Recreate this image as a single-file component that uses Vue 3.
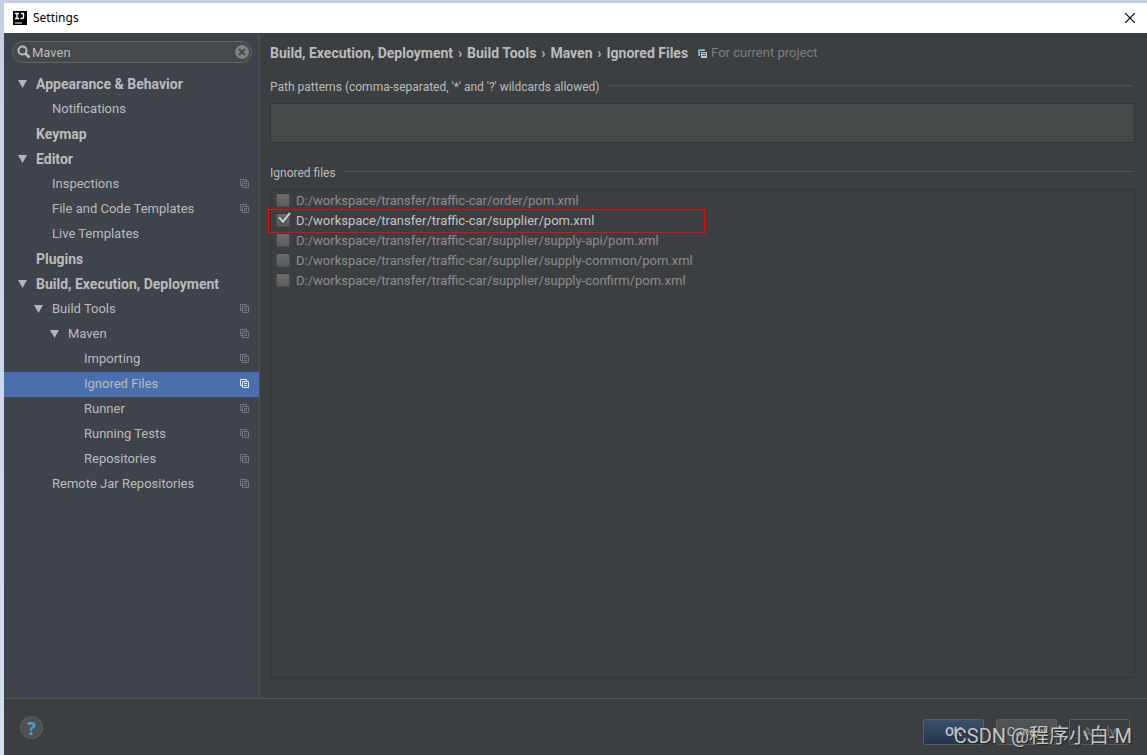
<script setup>
import { ref } from 'vue'

const query = ref('Maven')
const patterns = ref('')

const tree = [
  { label: 'Appearance & Behavior', level: 0, open: true, bold: true },
  { label: 'Notifications', level: 1 },
  { label: 'Keymap', level: 0, bold: true },
  { label: 'Editor', level: 0, open: true, bold: true },
  { label: 'Inspections', level: 1, project: true },
  { label: 'File and Code Templates', level: 1, project: true },
  { label: 'Live Templates', level: 1 },
  { label: 'Plugins', level: 0, bold: true },
  { label: 'Build, Execution, Deployment', level: 0, open: true, bold: true },
  { label: 'Build Tools', level: 1, open: true, project: true },
  { label: 'Maven', level: 2, open: true, project: true },
  { label: 'Importing', level: 3, project: true },
  { label: 'Ignored Files', level: 3, project: true, selected: true },
  { label: 'Runner', level: 3, project: true },
  { label: 'Running Tests', level: 3, project: true },
  { label: 'Repositories', level: 3, project: true },
  { label: 'Remote Jar Repositories', level: 1, project: true }
]

const crumbs = ['Build, Execution, Deployment', 'Build Tools', 'Maven', 'Ignored Files']

const files = ref([
  { path: 'D:/workspace/transfer/traffic-car/order/pom.xml', ignored: false },
  { path: 'D:/workspace/transfer/traffic-car/supplier/pom.xml', ignored: true },
  { path: 'D:/workspace/transfer/traffic-car/supplier/supply-api/pom.xml', ignored: false },
  { path: 'D:/workspace/transfer/traffic-car/supplier/supply-common/pom.xml', ignored: false },
  { path: 'D:/workspace/transfer/traffic-car/supplier/supply-confirm/pom.xml', ignored: false }
])
</script>

<template>
  <div class="desktop">
    <div class="window">
      <header class="titlebar">
        <svg class="logo" viewBox="0 0 14 14" aria-hidden="true">
          <rect width="14" height="14" fill="#000" />
          <path d="M2 2.500h4M4 2.500v5M2 7.500h4M8 2.500h3M10.500 2.500v3.500q0 1.500-1.500 1.500H7.500" fill="none" stroke="#fff" stroke-width="1.400" />
          <path d="M2 12h7" stroke="#fff" />
        </svg>
        <h1 class="title">Settings</h1>
        <button class="close" type="button" aria-label="Close">
          <svg viewBox="0 0 10 10" aria-hidden="true"><path d="M0 0L10 10M10 0L0 10" stroke="#000" stroke-width="1.2" /></svg>
        </button>
      </header>

      <div class="body">
        <aside class="sidebar">
          <div class="search">
            <svg class="lens" viewBox="0 0 14 14" aria-hidden="true">
              <circle cx="5.500" cy="5.500" r="4" fill="none" stroke="#bbb" stroke-width="2" />
              <path d="M8.500 8.500l4 4" stroke="#bbb" stroke-width="2.600" />
            </svg>
            <input v-model="query" type="text" aria-label="Search settings" />
            <button class="clear" type="button" aria-label="Clear search" @click="query = ''">
              <svg viewBox="0 0 14 14" aria-hidden="true">
                <circle cx="7" cy="7" r="7" fill="#7f8182" />
                <path d="M4 4l6 6M10 4l-6 6" stroke="#45494a" stroke-width="1.800" />
              </svg>
            </button>
          </div>
          <ul class="tree">
            <li
              v-for="node in tree"
              :key="node.label"
              :class="['node', 'level-' + node.level, { bold: node.bold, selected: node.selected }]"
            >
              <span class="arrow">
                <svg v-if="node.open" viewBox="0 0 9 8" aria-hidden="true"><path d="M0 0h9L4.500 8z" fill="#b5b6b7" /></svg>
              </span>
              <span class="label">{{ node.label }}</span>
              <svg v-if="node.project" class="project" viewBox="0 0 9 9" aria-hidden="true">
                <path d="M2 6.500H.5V.5h6V2M2.500 2.500h6v6h-6zM4 4.500h3M4 6.500h3" fill="none" stroke="currentColor" />
              </svg>
            </li>
          </ul>
        </aside>

        <main class="content">
          <nav class="crumbs" aria-label="Breadcrumb">
            <template v-for="(crumb, i) in crumbs" :key="crumb">
              <span v-if="i" class="sep">›</span>
              <span class="crumb">{{ crumb }}</span>
            </template>
            <span class="scope">
              <svg viewBox="0 0 9 9" aria-hidden="true">
                <path d="M.5 7V.5H7" fill="none" stroke="#5f9fb8" />
                <path d="M1.500 7V1.500H7" fill="none" stroke="#afb1b3" />
                <path d="M3 3h6v6H3z" fill="#c3c5c7" />
                <path d="M4 4.500h4M4 6.500h4" stroke="#55585a" />
              </svg>
              For current project
            </span>
          </nav>

          <section class="group patterns">
            <label class="heading" for="patterns">Path patterns (comma-separated, '*' and '?' wildcards allowed)</label>
            <textarea id="patterns" v-model="patterns" class="area"></textarea>
          </section>

          <section class="group ignored">
            <h2 class="heading">Ignored files</h2>
            <div class="list">
              <label v-for="file in files" :key="file.path" :class="['file', { on: file.ignored }]">
                <input v-model="file.ignored" type="checkbox" />
                <span class="path">{{ file.path }}</span>
                <svg v-if="file.ignored" class="tick" viewBox="0 0 14 13" aria-hidden="true">
                  <path d="M2 7l4 4.500L13 2" fill="none" stroke="#2b2b2b" stroke-width="2" />
                  <path d="M2 5.500l4 4.500L13 1" fill="none" stroke="#c8c8c8" stroke-width="2.200" />
                </svg>
              </label>
              <div class="marker"></div>
            </div>
          </section>
        </main>
      </div>

      <footer class="footer">
        <button class="help" type="button" aria-label="Help">?</button>
        <div class="actions">
          <button class="btn primary" type="button">OK</button>
          <button class="btn" type="button">Cancel</button>
          <button class="btn" type="button" disabled>Apply</button>
        </div>
        <span class="watermark">CSDN @程序小白-M</span>
      </footer>
    </div>
  </div>
</template>

<style>
body {
  margin: 0;
}
</style>

<style scoped>
* {
  box-sizing: border-box;
}
.desktop {
  min-height: 100vh;
  display: flex;
  padding: 3px 0 0 4px;
  background: linear-gradient(#c6cfe2, #d3e0ee);
  font: 13px/20px Roboto, "Noto Sans CJK SC", sans-serif;
  color: #bbb;
}
svg {
  display: block;
}
button {
  font: inherit;
  cursor: pointer;
}
.window {
  flex: 1;
  display: flex;
  flex-direction: column;
  min-width: 0;
  background: #3c3f41;
}
.titlebar {
  height: 30px;
  display: flex;
  align-items: center;
  padding: 0 12px 0 9px;
  background: #fff;
  color: #000;
}
.logo {
  width: 14px;
  height: 14px;
}
.title {
  flex: 1;
  margin: 0 0 0 6px;
  font: 400 12px/20px "Noto Sans", sans-serif;
}
.close {
  padding: 0;
  border: 0;
  background: none;
}
.close svg {
  width: 10px;
  height: 10px;
}
.body {
  flex: 1;
  display: flex;
}
.sidebar {
  width: 256px;
  flex: none;
  padding-top: 8px;
  background: #3f434c;
  border-right: 1px solid #4f5152;
}
.search {
  height: 22px;
  margin: 0 7px 9px 8px;
  display: flex;
  align-items: center;
  padding: 0 2px 0 4px;
  border: 1px solid #646464;
  border-radius: 11px;
  background: #45494a;
}
.lens {
  width: 14px;
  height: 14px;
}
.search input {
  flex: 1;
  min-width: 0;
  height: 20px;
  padding: 1px 0 0 1px;
  border: 0;
  outline: 0;
  background: none;
  color: #bbb;
  font: inherit;
}
.clear {
  padding: 0;
  border: 0;
  background: none;
}
.clear svg {
  width: 14px;
  height: 14px;
}
.tree {
  list-style: none;
  margin: 0;
  padding: 0;
}
.node {
  height: 25px;
  display: flex;
  align-items: center;
  padding-right: 10px;
  padding-bottom: 2px;
  color: #bbb;
}
.level-0 {
  padding-left: 14px;
}
.level-1 {
  padding-left: 30px;
}
.level-2 {
  padding-left: 46px;
}
.level-3 {
  padding-left: 62px;
}
.bold {
  font-size: 14px;
  font-weight: 700;
}
.arrow {
  width: 18px;
}
.arrow svg {
  width: 9px;
  height: 8px;
}
.label {
  flex: 1;
  white-space: nowrap;
}
.project {
  width: 9px;
  height: 9px;
  color: #74787d;
}
.selected {
  background: #4b6eaf;
}
.selected .project {
  color: #e6eaf2;
}
.content {
  flex: 1;
  min-width: 0;
  display: flex;
  flex-direction: column;
  padding: 10px 12px 20px 10px;
}
.crumbs {
  display: flex;
  white-space: nowrap;
  font-size: 14px;
  font-weight: 700;
}
.sep {
  width: 14px;
  text-align: center;
}
.scope {
  display: flex;
  align-items: center;
  gap: 4px;
  margin-left: 10px;
  font-size: 13px;
  font-weight: 400;
  color: #7d7f80;
}
.scope svg {
  width: 9px;
  height: 9px;
}
.group {
  display: flex;
  flex-direction: column;
}
.patterns {
  margin-top: 14px;
}
.ignored {
  flex: 1;
  margin-top: 20px;
}
.heading {
  display: flex;
  align-items: center;
  gap: 7px;
  margin: 0;
  font-size: 12px;
  font-weight: 400;
  white-space: nowrap;
}
.heading::after {
  content: "";
  flex: 1;
  height: 1px;
  margin: 0 2px 3px 0;
  background: #535657;
}
.area {
  height: 40px;
  margin-top: 6px;
  border: 1px solid #323434;
  outline: 0;
  resize: none;
  background: #45494a;
  color: #bbb;
  font: inherit;
}
.list {
  position: relative;
  flex: 1;
  margin-top: 6px;
  padding: 0 4px;
  border: 1px solid #323434;
}
.file {
  position: relative;
  height: 20px;
  display: flex;
  align-items: center;
  gap: 6px;
  padding-left: 1px;
  color: #8c8c8c;
  white-space: nowrap;
}
.file.on {
  color: #c4c4c4;
}
.path {
  padding-top: 2px;
}
.file input {
  appearance: none;
  width: 14px;
  height: 14px;
  margin: 0;
  border: 1px solid #4b4d4f;
  border-top-color: #343637;
  border-radius: 2px;
  background: linear-gradient(#6b6b6b, #5c5c5c);
}
.tick {
  position: absolute;
  left: 2px;
  top: 2px;
  width: 14px;
  height: 13px;
}
.marker {
  position: absolute;
  left: -3px;
  top: 19px;
  width: 437px;
  height: 24px;
  border: 1px solid #f00;
  pointer-events: none;
}
.footer {
  position: relative;
  height: 57px;
  display: flex;
  justify-content: space-between;
  align-items: flex-start;
  padding: 20px 17px 0 16px;
  border-top: 1px solid #555758;
}
.help {
  width: 23px;
  height: 23px;
  margin-top: -3px;
  padding: 0;
  border: 1px solid #5e6264;
  border-radius: 50%;
  background: #4d5153;
  color: #4a9fd0;
  font: 700 18px/20px "Noto Sans", sans-serif;
}
.actions {
  display: flex;
  gap: 12px;
}
.btn {
  width: 61px;
  height: 26px;
  padding: 0;
  border: 1px solid #5c5f61;
  border-radius: 2px;
  background: linear-gradient(#525658, #414547);
  color: #bbb;
}
.btn.primary {
  background: linear-gradient(#38506d, #243449);
  font-weight: 700;
}
.btn:disabled {
  background: none;
  color: #777;
}
.watermark {
  position: absolute;
  right: 15px;
  bottom: 5px;
  font: 400 20px/28px Roboto, "Noto Sans CJK SC", sans-serif;
  color: #c4c5c6;
  text-shadow: 1px 1px 1px #222;
  white-space: nowrap;
  pointer-events: none;
}
</style>
